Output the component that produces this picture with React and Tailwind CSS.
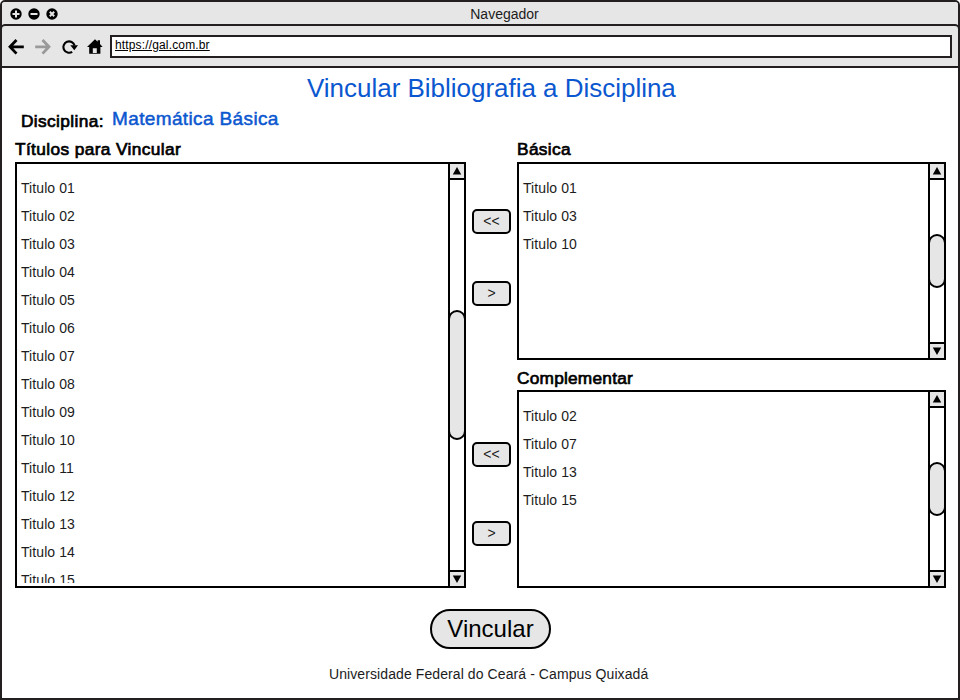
import React from "react";

const titles = Array.from({ length: 15 }, (_, i) => `Titulo ${String(i + 1).padStart(2, "0")}`);

function ArrowCell({ down }) {
  return (
    <div
      className={
        down
          ? "flex h-4 w-full shrink-0 items-center justify-center border-t-2 border-black bg-[#e6e6e6]"
          : "flex h-4 w-full shrink-0 items-center justify-center border-b-2 border-black bg-[#e6e6e6]"
      }
    >
      <svg width="14" height="14" viewBox="0 0 14 14">
        <path d={down ? "M2.8 3.5H11.2L7 11Z" : "M2.8 10.5H11.2L7 3Z"} />
      </svg>
    </div>
  );
}

function ListBox({ items, size, thumb }) {
  return (
    <div className={`flex border-2 border-black bg-white ${size}`}>
      <ul className="mb-[3px] min-w-0 flex-1 overflow-hidden pt-[10px] pl-[4px]">
        {items.map((t) => (
          <li key={t} className="h-7 text-[14px] leading-7 tracking-[0.08px] text-[#1c1c1c]">
            {t}
          </li>
        ))}
      </ul>
      <div className="flex w-4 shrink-0 flex-col border-l-2 border-black">
        <ArrowCell />
        <div className="min-h-0 flex-1">
          <div className={`-ml-[2px] w-[18px] rounded-[9px] border-2 border-black bg-[#e6e6e6] ${thumb}`} />
        </div>
        <ArrowCell down />
      </div>
    </div>
  );
}

function MoveButton({ label, className }) {
  return (
    <button
      className={`flex h-[25px] w-[39px] items-center justify-center rounded-[5px] border-2 border-black bg-[#e6e6e6] pb-px text-[14px] leading-none text-[#1c1c1c] ${className}`}
    >
      {label}
    </button>
  );
}

function Heading({ children, className }) {
  return (
    <h2 className={`h-[28px] text-[17.3px] whitespace-nowrap [-webkit-text-stroke:0.7px_#000] ${className}`}>
      {children}
    </h2>
  );
}

function WindowDot({ d }) {
  return (
    <svg width="12" height="12" viewBox="0 0 12 12">
      <circle cx="6" cy="6" r="5.7" />
      <path d={d} stroke="#e6e6e6" strokeWidth="2" />
    </svg>
  );
}

function NavIcons() {
  return (
    <div className="flex h-[23px] w-[108px] shrink-0 items-center pl-[6px]">
      <svg width="16" height="16" viewBox="0 0 16 16" fill="none" stroke="#000" strokeWidth="2.8">
        <path d="M8.5 1L2 7.8L8.5 14.6M2 7.8H15.8" />
      </svg>
      <svg className="ml-[11px]" width="16" height="16" viewBox="0 0 16 16" fill="none" stroke="#999" strokeWidth="2.8">
        <path d="M7.5 1L14 7.8L7.5 14.6M14 7.8H0.2" />
      </svg>
      <svg className="ml-[11px]" width="16" height="16" viewBox="0 0 16 16">
        <path d="M10.2 12.9A5.7 5.7 0 1 1 12.6 6.5" fill="none" stroke="#000" strokeWidth="2.1" />
        <path d="M8.3 6.2H16L12.3 11.2Z" />
      </svg>
      <svg className="ml-[9px]" width="16" height="16" viewBox="0 0 16 16">
        <path d="M8 0.2L10.6 2.8V1.2H13V5L15.6 8H13.4V14.8H2.2V8H0Z" />
        <path d="M5.8 9.2H9.8V14H5.8Z" fill="#e6e6e6" />
      </svg>
    </div>
  );
}

export default function App() {
  return (
    <div className="flex h-[700px] w-[960px] flex-col overflow-hidden rounded-t-[5px] border-2 border-[#231f20] bg-white font-['Liberation_Sans',Arial,sans-serif] text-black">
      <header className="flex h-[22px] shrink-0 bg-[#e6e6e6]">
        <div className="flex w-[100px] items-center gap-[6px] pt-px pl-[7.5px]">
          <WindowDot d="M6 2.5V9.5M2.5 6H9.5" />
          <WindowDot d="M2.5 6H9.5" />
          <WindowDot d="M3.8 3.8L8.2 8.2M8.2 3.8L3.8 8.2" />
        </div>
        <div className="flex-1 pr-[51px] text-center text-[14px] leading-[24px] text-[#1c1c1c]">Navegador</div>
      </header>
      <nav className="-mx-[2px] flex h-[44px] shrink-0 rounded-t-[5px] border-2 border-[#231f20] bg-[#e6e6e6] pt-[9px]">
        <NavIcons />
        <div className="h-[23px] w-[842px] border-2 border-[#231f20] bg-white pl-[3px] text-[12px] leading-[17px] tracking-[0.15px] underline">
          https://gal.com.br
        </div>
      </nav>
      <main className="flex flex-1 flex-col">
        <h1 className="h-[38px] pl-[305px] text-[26px] leading-[40px] tracking-[-0.02px] whitespace-nowrap text-[#0b57d0]">
          Vincular Bibliografia a Disciplina
        </h1>
        <div className="flex h-[28px] pl-[19px] whitespace-nowrap">
          <span className="w-[91px] text-[17.3px] leading-[30px] tracking-[0.38px] [-webkit-text-stroke:0.7px_#000]">
            Disciplina:
          </span>
          <span className="text-[19px] leading-[26px] tracking-[0.37px] text-[#0b57d0] [-webkit-text-stroke:0.5px_#0b57d0]">
            Matemática Básica
          </span>
        </div>
        <div className="flex h-[454px] pl-[13px]">
          <section className="w-[457px]">
            <Heading className="leading-[30px] tracking-[0.38px]">Títulos para Vincular</Heading>
            <ListBox items={titles} size="w-[451px] h-[426px]" thumb="mt-[130px] h-[130px]" />
          </section>
          <div className="w-[45px] pt-[75px]">
            <MoveButton label="<<" className="" />
            <MoveButton label=">" className="mt-[47px]" />
            <MoveButton label="<<" className="mt-[136px]" />
            <MoveButton label=">" className="mt-[54px]" />
          </div>
          <section className="w-[429px]">
            <Heading className="leading-[30px] tracking-[0.35px]">Básica</Heading>
            <ListBox items={[titles[0], titles[2], titles[9]]} size="w-[429px] h-[198px]" thumb="mt-[54px] h-[54px]" />
            <div className="pt-[2px]">
              <Heading className="leading-[32px] tracking-[0.22px]">Complementar</Heading>
            </div>
            <ListBox
              items={[titles[1], titles[6], titles[12], titles[14]]}
              size="w-[429px] h-[198px]"
              thumb="mt-[54px] h-[54px]"
            />
          </section>
        </div>
        <button className="mt-[21px] ml-[428px] h-10 w-[121px] rounded-[20px] border-2 border-black bg-[#e6e6e6] text-[24px] leading-[36px]">
          Vincular
        </button>
        <footer className="mt-[15px] pl-[327px] text-[14px] leading-5 tracking-[0.09px] whitespace-nowrap text-[#1c1c1c]">
          Universidade Federal do Ceará - Campus Quixadá
        </footer>
      </main>
    </div>
  );
}
